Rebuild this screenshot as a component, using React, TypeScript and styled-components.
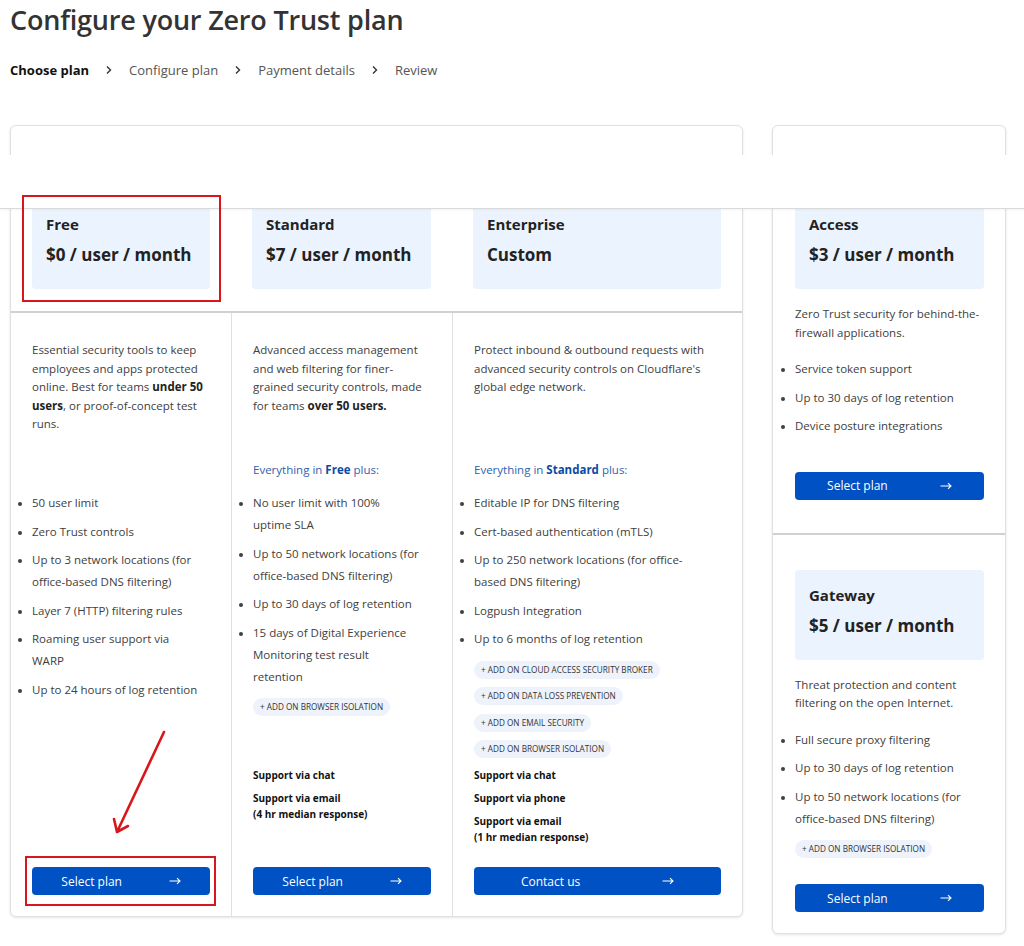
import React from "react";
import styled, { createGlobalStyle } from "styled-components";

const blue = "#0051c3";
const boxBlue = "#ebf3fe";
const textGrey = "#404040";
const lineGrey = "#e0e0e0";
const red = "#d8161b";

const GlobalStyle = createGlobalStyle`
  * { box-sizing: border-box; }
  body {
    margin: 0;
    background: #fff;
    font-family: "Open Sans", "Noto Sans", sans-serif;
    color: ${textGrey};
  }
`;

interface Plan {
  name: string;
  price: string;
  desc: React.ReactNode;
  plus?: string;
  features: string[];
  addons: string[];
  support: React.ReactNode[];
  action: string;
}

const plans: Plan[] = [
  {
    name: "Free",
    price: "$0 / user / month",
    desc: (
      <>
        Essential security tools to keep employees and apps protected online.
        Best for teams <b>under 50 users</b>, or proof-of-concept test runs.
      </>
    ),
    features: [
      "50 user limit",
      "Zero Trust controls",
      "Up to 3 network locations (for office-based DNS filtering)",
      "Layer 7 (HTTP) filtering rules",
      "Roaming user support via WARP",
      "Up to 24 hours of log retention",
    ],
    addons: [],
    support: [],
    action: "Select plan",
  },
  {
    name: "Standard",
    price: "$7 / user / month",
    desc: (
      <>
        Advanced access management and web filtering for finer-grained
        security controls, made for teams <b>over 50 users.</b>
      </>
    ),
    plus: "Free",
    features: [
      "No user limit with 100% uptime SLA",
      "Up to 50 network locations (for office-based DNS filtering)",
      "Up to 30 days of log retention",
      "15 days of Digital Experience Monitoring test result retention",
    ],
    addons: ["Browser isolation"],
    support: [
      "Support via chat",
      <>
        Support via email
        <br />
        (4 hr median response)
      </>,
    ],
    action: "Select plan",
  },
  {
    name: "Enterprise",
    price: "Custom",
    desc: (
      <>
        Protect inbound &amp; outbound requests with advanced security controls
        on Cloudflare's global edge network.
      </>
    ),
    plus: "Standard",
    features: [
      "Editable IP for DNS filtering",
      "Cert-based authentication (mTLS)",
      "Up to 250 network locations (for office-based DNS filtering)",
      "Logpush Integration",
      "Up to 6 months of log retention",
    ],
    addons: [
      "Cloud access security broker",
      "Data loss prevention",
      "Email security",
      "Browser isolation",
    ],
    support: [
      "Support via chat",
      "Support via phone",
      <>
        Support via email
        <br />
        (1 hr median response)
      </>,
    ],
    action: "Contact us",
  },
];

const sidePlans = [
  {
    name: "Access",
    price: "$3 / user / month",
    desc: "Zero Trust security for behind-the-firewall applications.",
    features: [
      "Service token support",
      "Up to 30 days of log retention",
      "Device posture integrations",
    ],
    addons: [] as string[],
  },
  {
    name: "Gateway",
    price: "$5 / user / month",
    desc: "Threat protection and content filtering on the open Internet.",
    features: [
      "Full secure proxy filtering",
      "Up to 30 days of log retention",
      "Up to 50 network locations (for office-based DNS filtering)",
    ],
    addons: ["Browser isolation"],
  },
];

const steps = ["Choose plan", "Configure plan", "Payment details", "Review"];

const Chevron = () => (
  <svg width="10" height="10" viewBox="0 0 10 10" fill="none">
    <path d="M3 1.5 6.5 5 3 8.5" stroke="#333" strokeWidth="1.4" />
  </svg>
);

const ArrowRight = () => (
  <svg width="12" height="8" viewBox="0 0 12 8" fill="none">
    <path d="M0.5 4h10.5M8 1.2 11 4 8 6.8" stroke="#fff" strokeWidth="1.1" />
  </svg>
);

const Arrow = () => (
  <svg width="1024" height="946" viewBox="0 0 1024 946" fill="none">
    <path
      d="M164 729 117 829M114 816l3 13 11-6"
      stroke={red}
      strokeWidth="2.6"
      strokeLinecap="round"
      strokeLinejoin="round"
    />
  </svg>
);

const App = () => {
  return (
    <Page>
      <GlobalStyle />
      <Title>Configure your Zero Trust plan</Title>
      <Steps>
        {steps.map((s, i) => (
          <React.Fragment key={s}>
            {i > 0 && <Chevron />}
            <Step $active={i === 0}>{s}</Step>
          </React.Fragment>
        ))}
      </Steps>

      <Plans>
        <MainCard>
          {plans.map((p) => (
            <HeaderCell key={p.name}>
              <PriceBox>
                <PlanName>{p.name}</PlanName>
                <PlanPrice>{p.price}</PlanPrice>
              </PriceBox>
            </HeaderCell>
          ))}
          {plans.map((p, i) => (
            <DescCell key={p.name} $first={i === 0}>
              <Desc>{p.desc}</Desc>
            </DescCell>
          ))}
          {plans.map((p, i) => (
            <PlusCell key={p.name} $first={i === 0}>
              {p.plus && (
                <Plus>
                  Everything in <b>{p.plus}</b> plus:
                </Plus>
              )}
            </PlusCell>
          ))}
          {plans.map((p, i) => (
            <FeatureCell key={p.name} $first={i === 0}>
              <FeatureList>
                {p.features.map((f) => (
                  <li key={f}>{f}</li>
                ))}
              </FeatureList>
              {p.addons.length > 0 && (
                <Addons>
                  {p.addons.map((a) => (
                    <Tag key={a}>+ Add on {a}</Tag>
                  ))}
                </Addons>
              )}
            </FeatureCell>
          ))}
          {plans.map((p, i) => (
            <SupportCell key={p.name} $first={i === 0}>
              {p.support.map((s, j) => (
                <Support key={j}>{s}</Support>
              ))}
            </SupportCell>
          ))}
          {plans.map((p, i) => (
            <ActionCell key={p.name} $first={i === 0}>
              <PlanButton>
                <span>{p.action}</span>
                <ArrowRight />
              </PlanButton>
            </ActionCell>
          ))}
        </MainCard>

        <SideCard>
          {sidePlans.map((p, i) => (
            <SideSection key={p.name} $first={i === 0}>
              <PriceBox>
                <PlanName>{p.name}</PlanName>
                <PlanPrice>{p.price}</PlanPrice>
              </PriceBox>
              <SideDesc>{p.desc}</SideDesc>
              <SideList>
                {p.features.map((f) => (
                  <li key={f}>{f}</li>
                ))}
              </SideList>
              {p.addons.map((a) => (
                <SideTag key={a}>+ Add on {a}</SideTag>
              ))}
              <SideButton>
                <span>Select plan</span>
                <ArrowRight />
              </SideButton>
            </SideSection>
          ))}
        </SideCard>
      </Plans>

      <StickyBand />
      <Marker $x={22} $y={192} $w={199} $h={107} />
      <Marker $x={25} $y={853} $w={191} $h={50} />
      <ArrowLayer>
        <Arrow />
      </ArrowLayer>
    </Page>
  );
};
export default App;

const Page = styled.div`
  position: relative;
  min-height: 946px;
  padding: 0 10px 20px;
`;

const Title = styled.h1`
  margin: 3px 0 0;
  font-size: 27px;
  line-height: 34px;
  font-weight: 600;
  color: #333;
  letter-spacing: -0.2px;
`;

const Steps = styled.nav`
  display: flex;
  align-items: center;
  gap: 15px;
  margin-top: 23px;
  height: 20px;
`;

const Step = styled.span<{ $active?: boolean }>`
  font-size: 13px;
  color: ${(p) => (p.$active ? "#111" : "#555")};
  font-weight: ${(p) => (p.$active ? 700 : 400)};
`;

const Plans = styled.div`
  display: flex;
  align-items: flex-start;
  gap: 29px;
  margin-top: 45px;
`;

const MainCard = styled.div`
  width: 733px;
  display: grid;
  grid-template-columns: 220px 221px 1fr;
  border: 1px solid ${lineGrey};
  border-radius: 6px;
  box-shadow: 0 1px 3px rgba(0, 0, 0, 0.1);
  background: #fff;
`;

const HeaderCell = styled.div`
  padding: 73px 21px 22px;
  border-bottom: 2px solid #d0d0d0;
`;

const BodyCell = styled.div<{ $first?: boolean }>`
  padding: 0 21px;
  border-left: ${(p) => (p.$first ? "none" : `1px solid ${lineGrey}`)};
`;

const DescCell = styled(BodyCell)`
  padding-top: 28px;
`;

const PlusCell = styled(BodyCell)`
  padding-top: 27px;
`;

const FeatureCell = styled(BodyCell)`
  padding-top: 13px;
`;

const SupportCell = styled(BodyCell)`
  padding-top: 9px;
`;

const ActionCell = styled(BodyCell)`
  padding-top: 15px;
  padding-bottom: 21px;
`;

const PriceBox = styled.div`
  height: 90px;
  padding: 15px 14px;
  background: ${boxBlue};
  border-radius: 4px;
`;

const PlanName = styled.div`
  font-size: 15px;
  line-height: 20px;
  font-weight: 700;
  color: #222;
`;

const PlanPrice = styled.div`
  margin-top: 9px;
  font-size: 17px;
  line-height: 24px;
  font-weight: 700;
  color: #222;
`;

const Desc = styled.p`
  margin: 0;
  font-size: 11.5px;
  line-height: 18.5px;
  b {
    font-weight: 700;
    color: #222;
  }
`;

const Plus = styled.p`
  margin: 0;
  font-size: 11.5px;
  line-height: 18.5px;
  color: #2f62b1;
  b {
    color: #0a4aa6;
  }
`;

const FeatureList = styled.ul`
  margin: 0;
  padding: 0 12px 0 0;
  list-style: disc outside;
  font-size: 11.5px;
  line-height: 22px;

  li {
    margin-bottom: 6.5px;
  }
  li::marker {
    font-size: 10px;
  }
`;

const Addons = styled.div`
  display: flex;
  flex-direction: column;
  align-items: flex-start;
  gap: 8.5px;
  margin-top: 10.5px;
`;

const Tag = styled.span`
  display: inline-block;
  height: 18px;
  padding: 0 7px;
  font-size: 8.2px;
  line-height: 18px;
  text-transform: uppercase;
  color: #333;
  background: #edf2fb;
  border-radius: 9px;
  white-space: nowrap;
`;

const Support = styled.p`
  margin: 0 0 7px;
  font-size: 10px;
  line-height: 16px;
  font-weight: 700;
  color: #111;
`;

const PlanButton = styled.button`
  width: 100%;
  height: 28px;
  display: flex;
  align-items: center;
  justify-content: space-around;
  border: none;
  border-radius: 4px;
  background: ${blue};
  color: #fff;
  font-family: inherit;
  font-size: 12px;
  cursor: pointer;
`;

const SideCard = styled.div`
  width: 234px;
  border: 1px solid ${lineGrey};
  border-radius: 6px;
  box-shadow: 0 1px 3px rgba(0, 0, 0, 0.1);
  background: #fff;
`;

const SideSection = styled.div<{ $first?: boolean }>`
  display: flex;
  flex-direction: column;
  align-items: flex-start;
  padding: ${(p) => (p.$first ? "73px 21px 33px 22px" : "35px 21px 21px 22px")};
  border-top: ${(p) => (p.$first ? "none" : "2px solid #d0d0d0")};

  & > ${PriceBox} {
    width: 100%;
  }
`;

const SideDesc = styled(Desc)`
  margin-top: 16px;
`;

const SideList = styled(FeatureList)`
  margin-top: 16px;
  margin-bottom: 2px;
  padding-right: 0;
`;

const SideTag = styled(Tag)`
  margin-top: 2px;
`;

const SideButton = styled(PlanButton)`
  margin-top: 26px;
`;

const StickyBand = styled.div`
  position: absolute;
  top: 152px;
  left: 0;
  right: 0;
  height: 54px;
  background: #fff;
  border-bottom: 1px solid #dadada;
  box-shadow: 0 1px 2px rgba(0, 0, 0, 0.05);
  z-index: 1;
`;

const Marker = styled.div<{ $x: number; $y: number; $w: number; $h: number }>`
  position: absolute;
  left: ${(p) => p.$x}px;
  top: ${(p) => p.$y}px;
  width: ${(p) => p.$w}px;
  height: ${(p) => p.$h}px;
  border: 2.5px solid ${red};
  z-index: 2;
`;

const ArrowLayer = styled.div`
  position: absolute;
  inset: 0;
  pointer-events: none;
  z-index: 2;

  svg {
    display: block;
  }
`;
